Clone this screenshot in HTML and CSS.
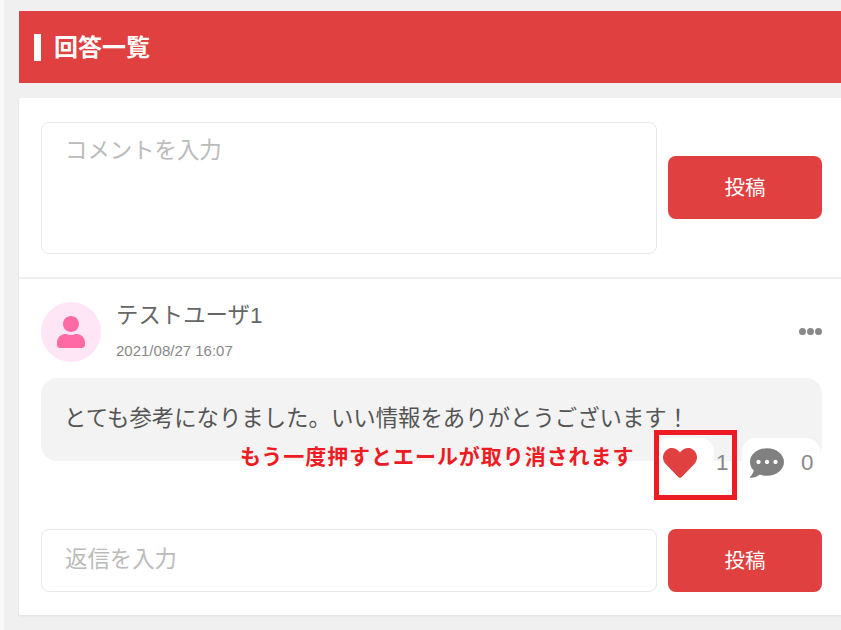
FILE: index.html
```html
<!DOCTYPE html>
<html lang="ja">
<head>
    <meta charset="UTF-8">
    <meta name="viewport" content="width=device-width, initial-scale=1.0">
    <title>回答一覧</title>
    <link rel="stylesheet" href="styles.css">
</head>
<body>
    <header class="section-header">
        <h2>回答一覧</h2>
    </header>

    <div class="card">
        <div class="comment-form">
            <div class="field field-large">コメントを入力</div>
            <button class="post-button">投稿</button>
        </div>

        <div class="answer">
            <div class="answer-head">
                <div class="avatar">
                    <svg viewBox="0 0 448 512" width="28" height="32"><path d="M224 256c70.7 0 128-57.3 128-128S294.7 0 224 0 96 57.3 96 128s57.3 128 128 128zm89.6 32h-16.7c-22.2 10.2-46.9 16-72.9 16s-50.6-5.8-72.9-16h-16.7C60.2 288 0 348.2 0 422.4V464c0 26.5 21.5 48 48 48h352c26.5 0 48-21.5 48-48v-41.6c0-74.2-60.2-134.4-134.4-134.4z"/></svg>
                </div>
                <div class="user">
                    <div class="user-name">テストユーザ1</div>
                    <div class="post-date">2021/08/27 16:07</div>
                </div>
                <div class="more"><span></span><span></span><span></span></div>
            </div>

            <div class="bubble">とても参考になりました。いい情報をありがとうございます！</div>

            <div class="reactions">
                <div class="reaction reaction-heart">
                    <svg viewBox="0 0 512 512" width="34" height="34"><path d="M462.3 62.6C407.5 15.9 326 24.3 275.7 76.2L256 96.5l-19.7-20.3C186.1 24.3 104.5 15.9 49.7 62.6c-62.8 53.6-66.1 149.8-9.9 207.9l193.5 199.8c12.5 12.9 32.8 12.9 45.3 0l193.5-199.8c56.3-58.1 53-154.3-9.8-207.9z"/></svg>
                    <span>1</span>
                </div>
                <div class="reaction reaction-comment">
                    <svg viewBox="0 0 512 512" width="34" height="34"><path d="M256 32C114.6 32 0 125.1 0 240c0 49.6 21.4 95 57 130.7C44.5 421.1 2.7 466 2.2 466.5c-2.2 2.3-2.8 5.7-1.5 8.7S4.8 480 8 480c66.3 0 116-31.8 140.6-51.4 32.7 12.3 69 19.4 107.4 19.4 141.4 0 256-93.1 256-208S397.4 32 256 32zM128 272c-17.7 0-32-14.3-32-32s14.3-32 32-32 32 14.3 32 32-14.3 32-32 32zm128 0c-17.7 0-32-14.3-32-32s14.3-32 32-32 32 14.3 32 32-14.3 32-32 32zm128 0c-17.7 0-32-14.3-32-32s14.3-32 32-32 32 14.3 32 32-14.3 32-32 32z"/></svg>
                    <span>0</span>
                </div>
            </div>

            <div class="reply-form">
                <div class="field field-small">返信を入力</div>
                <button class="post-button">投稿</button>
            </div>
        </div>

        <!-- annotation drawn over the screenshot -->
        <div class="note">もう一度押すとエールが取り消されます</div>
        <div class="note-box"></div>
    </div>
</body>
</html>
```

FILE: styles.css
```css
html, body {
    height: 100%;
}
body {
    font-family: "Liberation Sans", "Noto Sans CJK JP", sans-serif;
    background-color: #f0f0f0;
    border-left: 4px solid #f9f9f9;
    margin: 0;
    padding: 11px 0 0 15px;
    box-sizing: border-box;
    color: #555;
    overflow: hidden;
}
.section-header {
    background-color: #e04040;
    height: 72px;
    display: flex;
    align-items: center;
    padding-left: 15px;
}
.section-header h2 {
    margin: 0;
    color: #fff;
    font-size: 24px;
    font-weight: 700;
    line-height: 27px;
    border-left: 7px solid #fff;
    padding-left: 13px;
}
.card {
    position: relative;
    background: #fff;
    margin-top: 15px;
    height: 517px;
    box-shadow: 0 1px 2px rgba(0,0,0,0.08);
}
.comment-form {
    display: flex;
    align-items: center;
    gap: 11px;
    padding: 24px 19px 23px 22px;
    border-bottom: 2px solid #eee;
}
.comment-form .post-button {
    margin-top: -1px;
}
.field {
    flex: 1;
    box-sizing: border-box;
    border: 1px solid #e8e8e8;
    border-radius: 8px;
    padding: 0 23px;
    color: #bbb;
    font-size: 22.4px;
}
.field-large {
    height: 132px;
    line-height: 56px;
}
.field-small {
    height: 63px;
    line-height: 59px;
}
.post-button {
    width: 154px;
    height: 63px;
    border: none;
    border-radius: 8px;
    background-color: #e04040;
    color: #fff;
    font-family: inherit;
    font-size: 20.5px;
    padding: 0 0 3px;
}
.answer {
    padding: 23px 19px 0 22px;
}
.answer-head {
    display: flex;
    gap: 15px;
}
.avatar {
    width: 60px;
    height: 60px;
    border-radius: 50%;
    background-color: #ffe6f6;
    display: flex;
    align-items: center;
    justify-content: center;
}
.avatar svg {
    fill: #ff69a6;
    margin-top: -1px;
}
.user {
    flex: 1;
}
.user-name {
    font-size: 22.4px;
    line-height: 28px;
    color: #666;
}
.post-date {
    font-size: 15px;
    line-height: 18px;
    margin-top: 12px;
    color: #888;
}
.more {
    display: flex;
    gap: 1px;
    align-self: center;
    margin-top: -1px;
}
.more span {
    width: 7px;
    height: 7px;
    border-radius: 50%;
    background-color: #888;
}
.bubble {
    margin-top: 16px;
    height: 83px;
    box-sizing: border-box;
    background-color: #f3f3f3;
    border-radius: 16px;
    padding: 0 23px;
    font-size: 22.4px;
    line-height: 81px;
    color: #555;
}
.reactions {
    display: flex;
    justify-content: flex-end;
    gap: 28px;
    margin: -23px 2px 0 0;
}
.reaction {
    height: 68px;
    display: flex;
    align-items: flex-start;
    background: #fff;
    border-radius: 14px 14px 0 0;
    padding: 8px 0 0 8px;
    box-sizing: border-box;
    font-size: 22.4px;
    line-height: 34px;
    color: #888;
}
.reaction svg {
    flex-shrink: 0;
}
.reaction-heart {
    width: 59px;
    gap: 19px;
}
.reaction-heart svg {
    fill: #e04040;
}
.reaction-comment {
    width: 78px;
    gap: 17px;
}
.reaction-comment svg {
    fill: #808080;
}
.reply-form {
    display: flex;
    gap: 11px;
    margin-top: 23px;
}
.note {
    position: absolute;
    left: 221px;
    top: 344px;
    color: #ed1c24;
    font-size: 21px;
    line-height: 30px;
    font-weight: 700;
    letter-spacing: 0.95px;
    white-space: nowrap;
}
.note-box {
    position: absolute;
    left: 635px;
    top: 332px;
    width: 83px;
    height: 70px;
    box-sizing: border-box;
    border: 5px solid #ed1c24;
}
```
